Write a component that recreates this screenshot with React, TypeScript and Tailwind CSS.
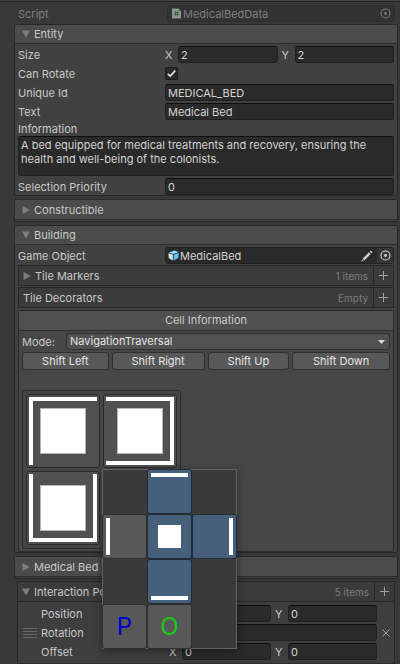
import { useState, type ReactNode } from "react"
import { clsx } from "clsx"

type Side = "top" | "right" | "bottom" | "left"

const INPUT =
  "block h-[17px] w-full min-w-0 flex-1 rounded-[3px] border border-[#212121] border-t-[#0d0d0d] bg-[#2a2a2a] px-0.5 text-[#d2d2d2] outline-none"

const SIDES: Record<Side, string> = {
  top: "h-1 w-full self-start",
  right: "h-full w-1 justify-self-end",
  bottom: "h-1 w-full self-end",
  left: "h-full w-1 justify-self-start",
}

function Arrow({ open }: { open?: boolean }) {
  return (
    <svg className="h-2 w-2 shrink-0" viewBox="0 0 8 8" fill="#7d7d7d">
      <path d={open ? "M0 .5h8L4 7.8z" : "M.5 0v8L7.8 4z"} />
    </svg>
  )
}

function Target() {
  return (
    <svg className="h-[11px] w-[11px]" viewBox="0 0 11 11" fill="none" stroke="currentColor">
      <circle cx="5.5" cy="5.5" r="4.5" strokeWidth="1.1" />
      <circle cx="5.5" cy="5.5" r="1.4" fill="currentColor" stroke="none" />
    </svg>
  )
}

function ScriptIcon() {
  return (
    <svg className="h-[11px] w-[9px] shrink-0" viewBox="0 0 9 11">
      <path d="M0 .5h6.5L9 3V10.5H0z" fill="#8f9490" />
      <path d="M6.5 .5V3H9z" fill="#6a6d6a" />
      <path d="M3.5 3.2v4.6M5.6 3.2v4.6M2.1 4.6h5M2.1 6.5h5" stroke="#3c6b47" strokeWidth="1" />
    </svg>
  )
}

function PrefabIcon() {
  return (
    <svg className="h-[11px] w-[11px] shrink-0" viewBox="0 0 11 11">
      <path d="M6.2 .4 10.6 1.9 5.6 3.9.8 2.6z" fill="#8fdcfa" />
      <path d="M.4 3.2 4.9 4.6v5.9L.8 8.2z" fill="#d3e6ee" />
      <path d="M10.7 2.8 5.7 4.7v5.8l4.7-2.6z" fill="#5cc3f2" />
    </svg>
  )
}

function Pencil() {
  return (
    <svg className="h-3 w-3" viewBox="0 0 12 12" fill="#c8c8c8">
      <path d="M9.8.4 11.6 2.2 10.5 3.3 8.7 1.5zM8 2.2 9.8 4 3.4 10.4 1.6 8.6zM1.1 9.3 2.7 10.9.4 11.6z" />
    </svg>
  )
}

function Plus() {
  return (
    <svg className="h-[9px] w-[9px]" viewBox="0 0 9 9" stroke="#a0a0a0">
      <path d="M4.5 0v9M0 4.5h9" />
    </svg>
  )
}

function Row({ label, htmlFor, children }: { label: string; htmlFor?: string; children: ReactNode }) {
  return (
    <div className="flex h-[17px] items-center">
      <label htmlFor={htmlFor} className="w-[147px] shrink-0">{label}</label>
      <div className="flex min-w-0 flex-1 items-center">{children}</div>
    </div>
  )
}

function Vector({ name, x, y }: { name: string; x: string; y: string }) {
  return (
    <div className="flex min-w-0 flex-1 gap-1">
      <label className="flex min-w-0 flex-1 items-center">
        <span className="w-[13px]">X</span>
        <input aria-label={`${name} X`} defaultValue={x} className={INPUT} />
      </label>
      <label className="flex min-w-0 flex-1 items-center">
        <span className="w-[13px]">Y</span>
        <input aria-label={`${name} Y`} defaultValue={y} className={INPUT} />
      </label>
    </div>
  )
}

function Foldout({ title, open, dense, children }: { title: string; open?: boolean; dense?: boolean; children?: ReactNode }) {
  return (
    <section className="rounded-[2px] border border-[#282828] bg-[#414141]">
      <button
        className={clsx(
          "flex w-full items-center gap-1 border-b border-[#2c2c2c] bg-[#4b4b4b] pl-[7px] text-left",
          open ? "h-[19px]" : "h-5"
        )}
      >
        <Arrow open={open} />
        {title}
      </button>
      {open ? (
        <div className={clsx("flex flex-col px-[3px] pt-0.5", dense ? "gap-px" : "gap-0.5")}>{children}</div>
      ) : (
        <div className="h-px" />
      )}
    </section>
  )
}

function ListHeader({ title, count, arrow }: { title: string; count: string; arrow?: "open" | "closed" }) {
  return (
    <div className="flex h-[21px] items-stretch border border-[#272727] bg-[#3b3b3b]">
      <div className="flex flex-1 items-center gap-1 pl-1">
        {arrow && <Arrow open={arrow === "open"} />}
        {title}
      </div>
      <span className="flex items-center pr-[5px] text-[10px] text-[#7d7d7d]">{count}</span>
      <button aria-label={`Add to ${title}`} className="flex w-5 items-center justify-center border-l border-[#272727]">
        <Plus />
      </button>
    </div>
  )
}

function Cell({ sides }: { sides: Side[] }) {
  return (
    <div className="grid h-[74px] w-[74px] rounded-[3px] border border-[#2a2a2a] bg-[#505050] p-0.5">
      {sides.map((side) => (
        <span key={side} className={clsx("bg-white [grid-area:1/1]", SIDES[side])} />
      ))}
      <span className="h-[46px] w-[46px] place-self-center border border-[#b5b5b5] bg-white [grid-area:1/1]" />
    </div>
  )
}

function PickerCell({ side, active, center }: { side?: Side; active?: boolean; center?: boolean }) {
  return (
    <button
      aria-label={side ?? "center"}
      className={clsx(
        "grid h-[43px] w-[43px] rounded-[2px] p-[3px]",
        active ? "bg-[#46607c] shadow-[0_0_0_1px_#252b33]" : "bg-[#585858] shadow-[0_0_0_1px_#303030]"
      )}
    >
      {side && <span className={clsx("bg-white [grid-area:1/1]", SIDES[side])} />}
      {center && <span className="h-[23px] w-[23px] place-self-center bg-white [grid-area:1/1]" />}
    </button>
  )
}

function CellPicker() {
  return (
    <div className="absolute top-[78px] left-[79px] z-10 grid grid-cols-[43px_43px_43px] gap-0.5 border border-[#636363] bg-[#3a3a3a] text-2xl shadow-[0_2px_8px_rgba(0,0,0,0.4)]">
      <span className="h-[43px]" />
      <PickerCell side="top" active />
      <span />
      <PickerCell side="left" />
      <PickerCell center active />
      <PickerCell side="right" active />
      <span />
      <PickerCell side="bottom" active />
      <span />
      <button className="h-[43px] rounded-[2px] bg-[#585858] text-[#0000d0] shadow-[0_0_0_1px_#303030]">P</button>
      <button className="h-[43px] rounded-[2px] bg-[#585858] text-[#14cc14] shadow-[0_0_0_1px_#303030]">O</button>
      <span />
    </div>
  )
}

function CellInformation() {
  const button =
    "h-[18px] rounded-[3px] border border-[#303030] bg-[#585858] text-[#e4e4e4] leading-4 whitespace-nowrap"

  return (
    <div className="mt-px rounded-[2px] border border-[#2b2b2b] bg-[#474747]">
      <h2 className="h-5 border-b border-[#2f2f2f] bg-[#505050] text-center leading-[19px]">Cell Information</h2>
      <div className="flex flex-col gap-0.5 px-[3px] pt-0.5 pb-0.5">
        <div className="flex items-center">
          <label htmlFor="mode" className="w-11 shrink-0">Mode:</label>
          <div className="grid flex-1 items-center">
            <select
              id="mode"
              className="h-[17px] w-full appearance-none rounded-[3px] border border-[#303030] bg-[#515151] pl-[3px] leading-[15px] text-[#e4e4e4] [grid-area:1/1]"
            >
              <option>NavigationTraversal</option>
            </select>
            <svg className="pointer-events-none mr-[5px] h-1 w-[7px] justify-self-end [grid-area:1/1]" viewBox="0 0 7 4" fill="#d8d8d8">
              <path d="M0 0h7L3.5 4z" />
            </svg>
          </div>
        </div>
        <div className="grid grid-cols-[87fr_93fr_82fr_98fr] gap-[3px]">
          <button className={button}>Shift Left</button>
          <button className={button}>Shift Right</button>
          <button className={button}>Shift Up</button>
          <button className={button}>Shift Down</button>
        </div>
        <div className="relative mt-[18px] grid w-fit grid-cols-2 gap-[3px] rounded-[3px] border border-[#2b2b2b] bg-[#464646] p-[3px]">
          <Cell sides={["top", "left"]} />
          <Cell sides={["top", "right", "bottom"]} />
          <Cell sides={["left", "bottom", "right"]} />
          <CellPicker />
        </div>
      </div>
    </div>
  )
}

export default function App() {
  const [canRotate, setCanRotate] = useState(true)

  return (
    <main className="min-h-screen overflow-hidden border-t border-[#444444] bg-[#383838] pr-0.5 pl-3.5 font-['Inter',sans-serif] text-[11px] leading-[14px] text-[#c8c8c8]">
      <div className="-mr-0.5 -ml-3.5 h-px bg-[#232323]" />
      <div className="mt-[3px] flex h-[17px] items-center pr-[3px] pl-1 text-[#7d7d7d]">
        <span className="w-[149px] shrink-0">Script</span>
        <div className="flex h-[17px] min-w-0 flex-1 items-center gap-0.5 rounded-[3px] border border-[#2d2d2d] bg-[#323232] pr-[3px] pl-1">
          <ScriptIcon />
          <span className="flex-1">MedicalBedData</span>
          <Target />
        </div>
      </div>

      <div className="mt-0.5 flex flex-col gap-[3px]">
        <Foldout title="Entity" open>
          <Row label="Size">
            <Vector name="Size" x="2" y="2" />
          </Row>
          <Row label="Can Rotate" htmlFor="can-rotate">
            <span className="grid place-items-center">
              <input
                id="can-rotate"
                type="checkbox"
                checked={canRotate}
                onChange={(e) => setCanRotate(e.target.checked)}
                className="h-[13px] w-[13px] appearance-none rounded-[2px] border border-[#1c1c1c] bg-[#2a2a2a] [grid-area:1/1]"
              />
              {canRotate && (
                <svg className="pointer-events-none h-[9px] w-[9px] [grid-area:1/1]" viewBox="0 0 9 9" fill="none" stroke="#f0f0f0" strokeWidth="1.6">
                  <path d="M.8 4.8 3.2 7.2 8.2 1.6" />
                </svg>
              )}
            </span>
          </Row>
          <Row label="Unique Id" htmlFor="unique-id">
            <input id="unique-id" defaultValue="MEDICAL_BED" className={INPUT} />
          </Row>
          <Row label="Text" htmlFor="text">
            <input id="text" defaultValue="Medical Bed" className={INPUT} />
          </Row>
          <div className="flex flex-col">
            <label htmlFor="information">Information</label>
            <textarea
              id="information"
              defaultValue="A bed equipped for medical treatments and recovery, ensuring the health and well-being of the colonists."
              className="block h-10 resize-none rounded-[3px] border border-[#212121] border-t-[#0d0d0d] bg-[#2a2a2a] px-0.5 pt-px text-[#d2d2d2] outline-none"
            />
          </div>
          <Row label="Selection Priority" htmlFor="priority">
            <input id="priority" defaultValue="0" className={INPUT} />
          </Row>
        </Foldout>

        <Foldout title="Constructible" />

        <Foldout title="Building" open dense>
          <Row label="Game Object">
            <div className="flex h-[17px] min-w-0 flex-1 items-center rounded-[3px] border border-[#212121] bg-[#2a2a2a] pl-0.5 text-[#d2d2d2]">
              <PrefabIcon />
              <span className="ml-px flex-1">MedicalBed</span>
              <button aria-label="Edit object" className="mr-1"><Pencil /></button>
              <button aria-label="Select object" className="flex h-[15px] w-4 items-center justify-center bg-[#373737]">
                <Target />
              </button>
            </div>
          </Row>
          <ListHeader title="Tile Markers" count="1 items" arrow="closed" />
          <ListHeader title="Tile Decorators" count="Empty" />
          <CellInformation />
        </Foldout>

        <Foldout title="Medical Bed" />
      </div>

      <div className="mt-0.5 mr-[3px] ml-[3px] border-x border-[#272727] bg-[#3e3e3e]">
        <div className="-mx-px">
          <ListHeader title="Interaction Points" count="5 items" arrow="open" />
        </div>
        <div className="flex items-center border-b border-[#2c2c2c] py-[3px] pl-[5px]">
          <svg className="h-2.5 w-3.5 shrink-0" viewBox="0 0 14 10" stroke="#666666">
            <path d="M0 .5h14M0 3.5h14M0 6.5h14M0 9.5h14" />
          </svg>
          <div className="flex min-w-0 flex-1 flex-col gap-0.5 pl-1">
            <div className="flex h-[17px] items-center">
              <span className="w-32 shrink-0">Position</span>
              <Vector name="Position" x="0" y="0" />
            </div>
            <div className="flex h-[17px] items-center">
              <label htmlFor="rotation" className="w-32 shrink-0">Rotation</label>
              <input id="rotation" defaultValue="0" className={INPUT} />
            </div>
            <div className="flex h-[17px] items-center">
              <span className="w-32 shrink-0">Offset</span>
              <Vector name="Offset" x="0" y="0" />
            </div>
          </div>
          <button aria-label="Remove item" className="flex w-[17px] shrink-0 justify-center">
            <svg className="h-2 w-2" viewBox="0 0 8 8" stroke="#a0a0a0">
              <path d="M.5.5 7.5 7.5M7.5.5.5 7.5" />
            </svg>
          </button>
        </div>
      </div>
    </main>
  )
}
